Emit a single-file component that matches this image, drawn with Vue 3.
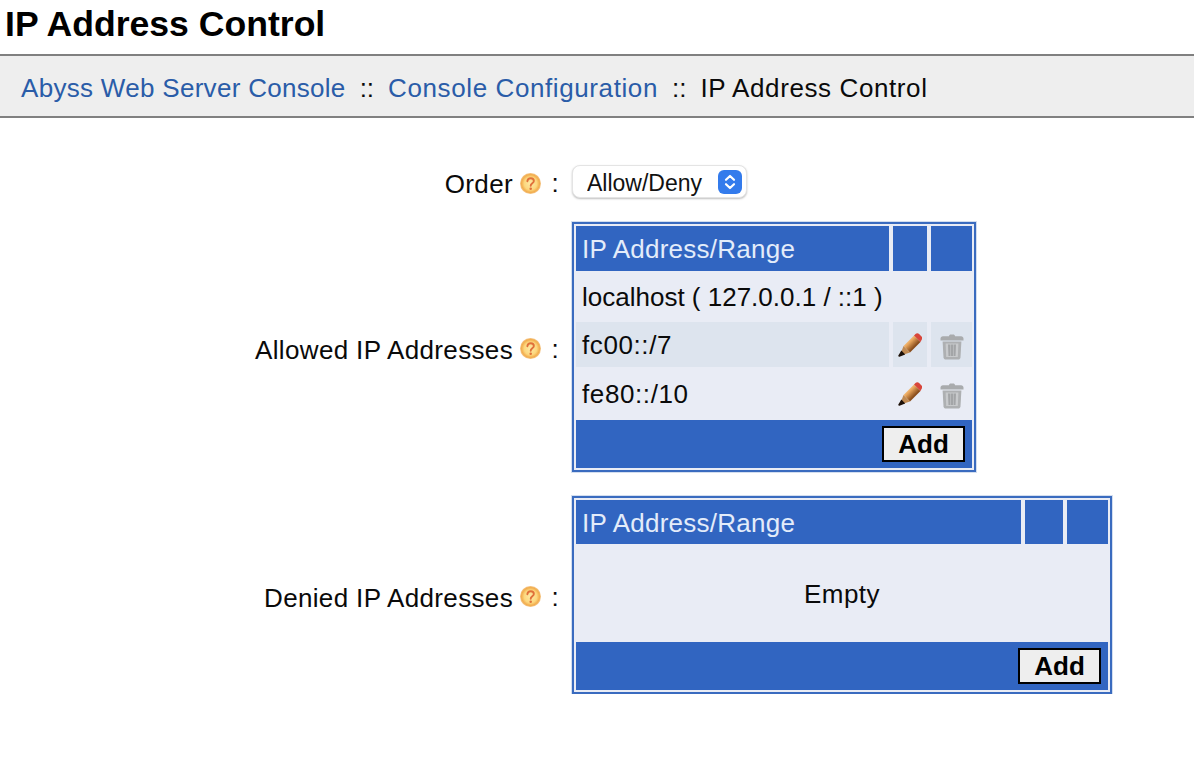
<template>
  <div class="page">
    <h1 class="title">IP Address Control</h1>
    <div class="crumbs">
      <a href="#" class="home">Abyss Web Server Console</a>
      <span class="sep">::</span>
      <a href="#">Console Configuration</a>
      <span class="sep">::</span>
      <span>IP Address Control</span>
    </div>

    <form class="form" @submit.prevent>
      <div class="label">
        <span>Order</span>
        <svg class="help" viewBox="0 0 20 20"><use href="#help-icon" /></svg>
        <span class="colon">:</span>
      </div>
      <div class="select-wrap">
        <select v-model="order" class="select">
          <option>Allow/Deny</option>
          <option>Deny/Allow</option>
        </select>
        <svg class="stepper" viewBox="0 0 24 24">
          <rect width="24" height="24" rx="6" fill="#337bec" />
          <path d="M8 9.800 12 6l4 3.800M8 14.200 12 18l4-3.800" fill="none" stroke="#fff" stroke-width="2.200" stroke-linecap="round" stroke-linejoin="round" />
        </svg>
      </div>

      <div class="label">
        <span>Allowed IP Addresses</span>
        <svg class="help" viewBox="0 0 20 20"><use href="#help-icon" /></svg>
        <span class="colon">:</span>
      </div>
      <div class="ip-table allowed">
        <div class="head">IP Address/Range</div>
        <div class="head"></div>
        <div class="head"></div>
        <template v-for="(row, index) in allowed" :key="row.name">
          <div class="cell" :class="{ alt: index === 1, ip: row.editable }">{{ row.name }}</div>
          <div class="cell icon" :class="{ alt: index === 1 }">
            <svg v-if="row.editable" class="pencil" viewBox="0 0 24 24"><use href="#pencil-icon" /></svg>
          </div>
          <div class="cell icon" :class="{ alt: index === 1 }">
            <svg v-if="row.editable" class="trash" viewBox="0 0 24 26"><use href="#trash-icon" /></svg>
          </div>
        </template>
        <div class="foot"><button type="button" class="add">Add</button></div>
      </div>

      <div class="label">
        <span>Denied IP Addresses</span>
        <svg class="help" viewBox="0 0 20 20"><use href="#help-icon" /></svg>
        <span class="colon">:</span>
      </div>
      <div class="ip-table denied">
        <div class="head">IP Address/Range</div>
        <div class="head"></div>
        <div class="head"></div>
        <div class="empty">Empty</div>
        <div class="foot"><button type="button" class="add">Add</button></div>
      </div>
    </form>

    <svg class="defs" width="0" height="0">
      <defs>
        <radialGradient id="help-fill" cx="0.5" cy="0.5" r="0.5">
          <stop offset="0" stop-color="#fde9a6" />
          <stop offset="0.6" stop-color="#fcd77e" />
          <stop offset="0.85" stop-color="#f2ad4e" />
          <stop offset="1" stop-color="#f4c689" />
        </radialGradient>
        <linearGradient id="pencil-fill" x1="0.15" y1="0.15" x2="0.65" y2="0.65">
          <stop offset="0" stop-color="#f8dcae" />
          <stop offset="0.45" stop-color="#eba95f" />
          <stop offset="1" stop-color="#8a4e1c" />
        </linearGradient>
        <g id="help-icon">
          <circle cx="10" cy="10" r="10" fill="url(#help-fill)" />
          <path d="M7 7.800C7.200 5.900 8.500 5 10.200 5c1.800 0 3 1 3 2.600 0 2.200-3 2.300-3 4.600" fill="none" stroke="#e0703a" stroke-width="1.800" stroke-linecap="round" />
          <circle cx="10.200" cy="15" r="1.200" fill="#e0703a" />
        </g>
        <g id="pencil-icon">
          <path d="M5.500 13 16 2.500 22.500 9 12 19.500z" fill="url(#pencil-fill)" />
          <path d="M16 2.500 17.500 1c1-1 2.600-1 3.600 0l2.400 2.400c1 1 1 2.600 0 3.600L22.500 9z" fill="#d8453a" />
          <path d="M5.500 13 12 19.500 5 21.800 3 19.800z" fill="#c08a52" />
          <path d="M3.400 17.600 7.200 21.400 1.500 23.700c-.6.200-1.400-.500-1.200-1.200z" fill="#1c1008" />
        </g>
        <g id="trash-icon">
          <path d="M9 2.200C9 1 9.800.4 11 .4h2c1.200 0 2 .6 2 1.800h6c1.500 0 2.500 1 2.500 2.300V6.600H.5V4.500C.5 3.200 1.500 2.200 3 2.200z" fill="#a9abad" />
          <path d="M2.600 7.600h18.800l-.9 15.600c-.1 1.500-1.100 2.400-2.600 2.400H6.100c-1.500 0-2.500-.9-2.600-2.400z" fill="#aeb0b2" />
          <path d="M5.600 9.600h12.800l-.6 13.400H6.200z" fill="#c8cacc" />
          <path d="M8 10.500h2.300v11.500H8.500zM10.850 10.500h2.300v11.500h-2.300zM13.700 10.500H16l-.5 11.500h-1.800z" fill="#a3a5a7" />
        </g>
      </defs>
    </svg>
  </div>
</template>

<script setup>
import { ref } from 'vue'

const order = ref('Allow/Deny')

const allowed = [
  { name: 'localhost ( 127.0.0.1 / ::1 )', editable: false },
  { name: 'fc00::/7', editable: true },
  { name: 'fe80::/10', editable: true },
]
</script>

<style scoped>
.page {
  font-family: "Liberation Sans", Arial, sans-serif;
  font-size: 26px;
  color: #0a0a0a;
}

.title {
  margin: 0;
  padding-left: 5px;
  height: 54px;
  font-size: 35.6px;
  line-height: 48px;
  font-weight: bold;
  color: #000;
}

.crumbs {
  display: flex;
  align-items: center;
  height: 55px;
  padding: 5px 0 0 21px;
  letter-spacing: 0.6px;
  background: #eeeeee;
  border-top: 2px solid #808080;
  border-bottom: 2px solid #808080;
}

.crumbs a {
  color: #2a5ca8;
  text-decoration: none;
}

.crumbs .home {
  letter-spacing: 0.3px;
}

.sep {
  margin: 0 14px;
  letter-spacing: 0;
}

.form {
  display: grid;
  grid-template-columns: 560px max-content;
  column-gap: 12px;
  row-gap: 24px;
  align-items: center;
  margin-top: 47px;
}

.label {
  display: flex;
  align-items: center;
  justify-content: flex-end;
  padding-top: 5px;
  line-height: 26px;
  letter-spacing: 0.35px;
}

.help {
  width: 21px;
  height: 21px;
  margin-left: 7px;
  position: relative;
  top: -1px;
  filter: blur(0.4px);
}

.colon {
  width: 19px;
  text-align: right;
  padding-right: 1px;
  box-sizing: border-box;
  position: relative;
  top: -1px;
}

.select-wrap {
  position: relative;
  width: 175px;
  height: 33px;
}

.select {
  appearance: none;
  width: 100%;
  height: 100%;
  padding: 2px 0 0 14px;
  font: inherit;
  font-size: 23px;
  color: #111;
  background: #fff;
  border: 1px solid #e4e4e4;
  border-radius: 8px;
  box-shadow: 0 1px 2px rgba(0, 0, 0, 0.25);
}

.stepper {
  position: absolute;
  top: 5px;
  right: 5px;
  width: 24px;
  height: 24px;
  pointer-events: none;
}

.ip-table {
  display: grid;
  gap: 4px;
  padding: 2px;
  background: #e9ecf5;
  border: 2px solid #3a6bbf;
  box-shadow: 0 0 0 1px #d3deef;
  box-sizing: border-box;
}

.allowed {
  grid-template-columns: 313px 34px 41px;
  grid-template-rows: 45px 43px 45px 45px 48px;
  width: 404px;
  height: 250px;
}

.denied {
  grid-template-columns: 445px 38px 41px;
  grid-template-rows: 44px 90px 48px;
  width: 540px;
  height: 198px;
}

.head {
  display: flex;
  align-items: center;
  padding: 2px 0 0 6px;
  letter-spacing: 0.25px;
  background: #3165c1;
  color: #e3ecfa;
}

.cell {
  display: flex;
  align-items: center;
  padding: 2px 0 0 6px;
}

.cell.ip {
  letter-spacing: 0.6px;
}

.cell.icon {
  justify-content: center;
  padding: 0;
}

.alt {
  background: #dde4ee;
}

.pencil {
  width: 24px;
  height: 24px;
  filter: blur(0.4px);
}

.trash {
  width: 24px;
  height: 26px;
  margin-top: 4px;
  filter: blur(0.4px);
}

.empty {
  grid-column: 1 / -1;
  display: flex;
  align-items: center;
  justify-content: center;
  padding-top: 2px;
  letter-spacing: 0.5px;
}

.foot {
  grid-column: 1 / -1;
  display: flex;
  align-items: center;
  justify-content: flex-end;
  padding-right: 7px;
  background: #3165c1;
}

.add {
  width: 83px;
  height: 36px;
  padding: 0;
  font: inherit;
  font-weight: bold;
  color: #000;
  background: #eeeeee;
  border: 2px solid #000;
}

.defs {
  position: absolute;
}
</style>
